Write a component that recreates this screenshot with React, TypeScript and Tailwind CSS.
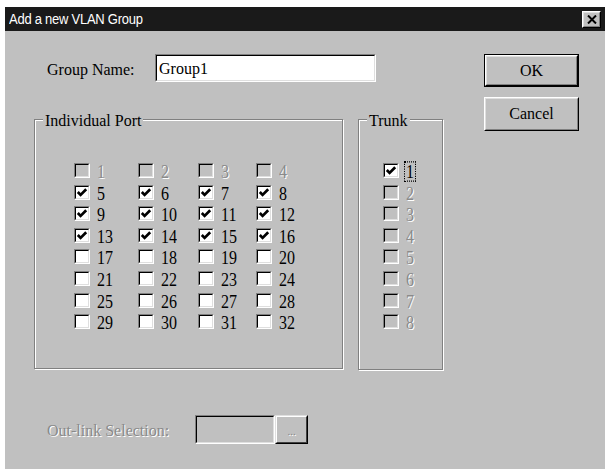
import type { ReactNode } from 'react';

const serif = "font-['Liberation_Serif','Times_New_Roman',serif] text-[16px] text-black";
const disabledText = 'text-[#8a8a8a] [text-shadow:1px_1px_0_#ffffff]';

// sunken 3d edge used by edit boxes and checkboxes
function Sunken({ className, fill, children }: { className: string; fill: string; children?: ReactNode }) {
  return (
    <div className={`border border-t-[#808080] border-l-[#808080] border-b-white border-r-white ${className}`}>
      <div className={`h-full w-full border border-t-black border-l-black border-b-[#dfdfdf] border-r-[#dfdfdf] ${fill}`}>
        {children}
      </div>
    </div>
  );
}

function Raised({ className, children }: { className: string; children?: ReactNode }) {
  return (
    <div className={`border border-t-white border-l-white border-b-black border-r-black bg-[#c0c0c0] ${className}`}>
      <div className="flex h-full w-full items-center justify-center border border-t-[#dfdfdf] border-l-[#dfdfdf] border-b-[#808080] border-r-[#808080]">
        {children}
      </div>
    </div>
  );
}

function CheckBox({
  n,
  checked = false,
  disabled = false,
  focus = false,
  width,
}: {
  n: number;
  checked?: boolean;
  disabled?: boolean;
  focus?: boolean;
  width: string;
}) {
  return (
    <div className={`flex h-[21.6px] items-start ${width}`}>
      <Sunken className="h-[15px] w-[16px] shrink-0" fill={disabled ? 'bg-[#c0c0c0]' : 'bg-white'}>
        {checked && (
          <svg viewBox="0 0 12 11" className="h-full w-full">
            <path d="M1.8 5 L4.6 7.9 L10.2 2.2" fill="none" stroke="#000" strokeWidth="2.7" />
          </svg>
        )}
      </Sunken>
      <span
        className={`ml-[6px] mt-[1px] inline-block px-[1px] leading-[15px] scale-y-120 ${
          focus ? 'outline outline-1 outline-dotted outline-black' : ''
        } ${disabled ? disabledText : ''}`}
      >
        {n}
      </span>
    </div>
  );
}

function GroupBox({ title, className, children }: { title: string; className: string; children: ReactNode }) {
  return (
    <div className={`relative border border-[#808080] shadow-[inset_1px_1px_0_#ffffff,1px_1px_0_#ffffff] ${className}`}>
      <span className="absolute left-[8px] top-[-8px] bg-[#c0c0c0] px-[2px] leading-[18px]">{title}</span>
      {children}
    </div>
  );
}

const colWidths = ['w-[64px]', 'w-[60px]', 'w-[58px]', 'w-[50px]'];

export default function App() {
  const rows = Array.from({ length: 8 }, (_, r) => [1, 2, 3, 4].map((c) => r * 4 + c));

  return (
    <div className="h-[469px] w-[605px] bg-white pl-[5px] pt-[7px]">
      {/* caption */}
      <div className="flex h-[24px] items-center justify-between bg-[#1a1a1a] pl-[4px] pr-[4px]">
        <span className="inline-block scale-y-115 font-['Liberation_Sans',Arial,sans-serif] text-[13px] tracking-[-0.25px] text-white">
          Add a new VLAN Group
        </span>
        <div className="h-[17px] w-[19px] border border-t-white border-l-white border-b-black border-r-black bg-[#c0c0c0]">
          <div className="flex h-full w-full items-center justify-center border border-t-[#dfdfdf] border-l-[#dfdfdf] border-b-[#808080] border-r-[#808080]">
            <svg viewBox="0 0 10 9" className="h-[9px] w-[10px]">
              <path d="M1 0.5 L9 8.5 M9 0.5 L1 8.5" stroke="#000" strokeWidth="2" />
            </svg>
          </div>
        </div>
      </div>

      <div className={`flex h-[438px] bg-[#c0c0c0] ${serif}`}>
        <div className="w-[479px] pt-[23px]">
          <div className="flex h-[28px] items-center">
            <span className="mt-[4px] w-[150px] pl-[42px]">Group Name:</span>
            <Sunken className="h-[28px] w-[221px]" fill="bg-white">
              <div className="flex h-full items-center pl-[2px] pt-[1px]">Group1</div>
            </Sunken>
          </div>

          <div className="ml-[29px] mt-[37px] flex gap-[15px]">
            <GroupBox title="Individual Port" className="h-[250px] w-[309px] pl-[39px] pt-[43px]">
              {rows.map((row, r) => (
                <div key={r} className="flex">
                  {row.map((n, c) => (
                    <CheckBox key={n} n={n} width={colWidths[c]} checked={n >= 5 && n <= 16} disabled={n <= 4} />
                  ))}
                </div>
              ))}
            </GroupBox>
            <GroupBox title="Trunk" className="h-[251px] w-[85px] pl-[24px] pt-[43px]">
              {[1, 2, 3, 4, 5, 6, 7, 8].map((n) => (
                <CheckBox key={n} n={n} width="w-[50px]" checked={n === 1} focus={n === 1} disabled={n > 1} />
              ))}
            </GroupBox>
          </div>

          <div className="mt-[45px] flex h-[29px] items-center">
            <span className={`mt-[2px] w-[190px] pl-[42px] ${disabledText}`}>Out-link Selection:</span>
            <Sunken className="h-[29px] w-[80px]" fill="bg-[#c0c0c0]" />
            <div className="h-[29px] w-[33px] border border-t-[#dfdfdf] border-l-[#dfdfdf] border-b-black border-r-black">
              <div className="flex h-full w-full items-end justify-center border border-t-white border-l-white border-b-[#404040] border-r-[#404040] pb-[5px] text-[11px] leading-[11px]">
                <span className={disabledText}>...</span>
              </div>
            </div>
          </div>
        </div>

        <div className="flex w-[95px] flex-col pt-[23px]">
          <div className="h-[33px] border border-black">
            <Raised className="h-full w-full">
              <span>OK</span>
            </Raised>
          </div>
          <Raised className="mt-[10px] h-[34px] w-full">
            <span>Cancel</span>
          </Raised>
        </div>
      </div>
    </div>
  );
}
